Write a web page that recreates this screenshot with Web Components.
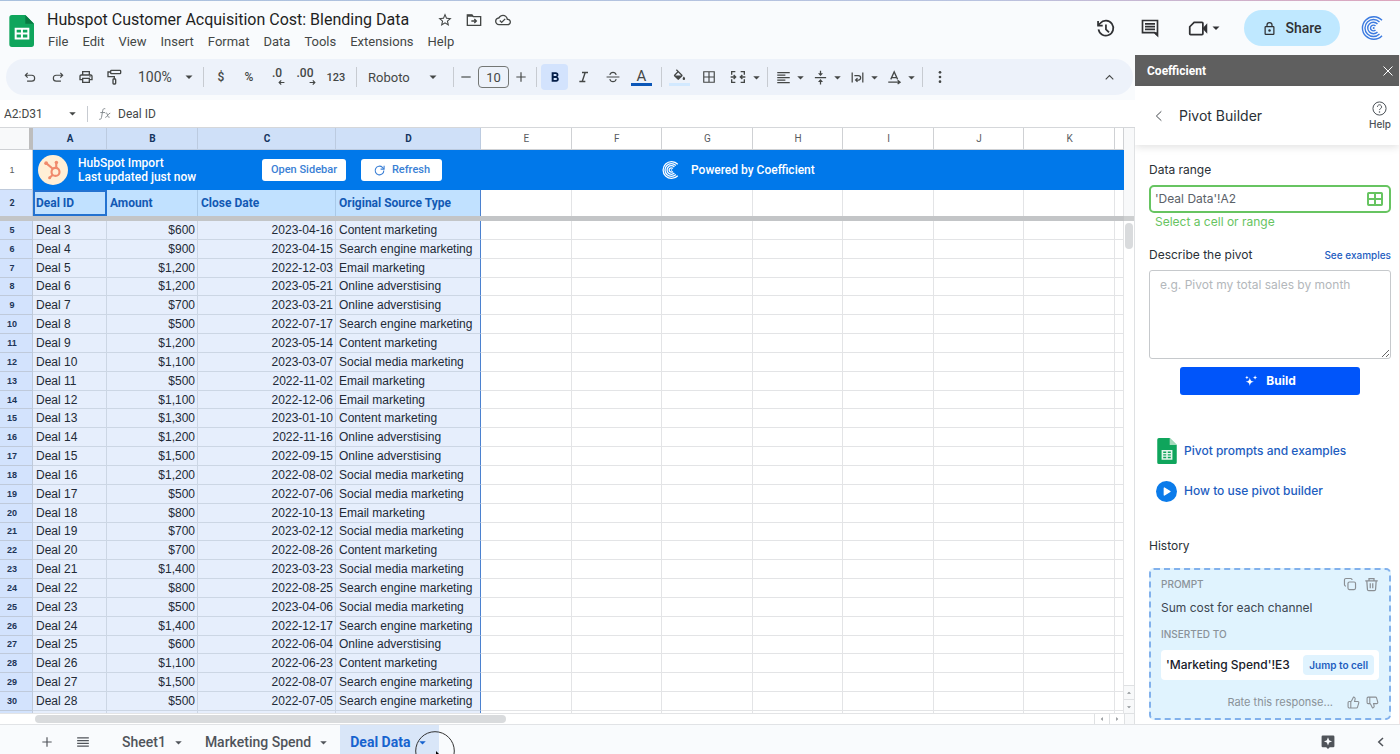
<!DOCTYPE html>
<html lang="en">
<head>
<meta charset="utf-8">
<title>Hubspot Customer Acquisition Cost: Blending Data</title>
<style>
    html, body {
        height: 100%;
        margin: 0;
    }
    body {
        font-family: Roboto, "Liberation Sans", sans-serif;
        font-size: 13px;
        color: #444746;
        background: #f9fbfd;
        overflow: hidden;
    }
</style>
</head>
<body>
<sheet-app></sheet-app>

<script>
// fill icons use currentColor, stroke icons are wrapped in a <g class="s">
const icons = {
    caret: '<path d="M6 9.500h12l-6 6z"/>',
    undo: '<g class="s"><path d="M8 5 4 9l4 4M4.500 9H15a5 5 0 0 1 0 10H7"/></g>',
    redo: '<g class="s"><path d="M16 5l4 4-4 4M19.500 9H9a5 5 0 0 0 0 10h8"/></g>',
    print: '<path d="M19 8h-1V3H6v5H5c-1.660 0-3 1.340-3 3v6h4v4h12v-4h4v-6c0-1.660-1.340-3-3-3zM8 5h8v3H8V5zm8 12v2H8v-4h8v2zm2-2v-2H6v2H4v-4c0-.55.45-1 1-1h14c.55 0 1 .45 1 1v4h-2z"/><circle cx="18" cy="11.500" r="1"/>',
    paint: '<g class="s"><rect x="7" y="2" width="15" height="5" rx="1"/><path d="M7 4.500H3V11.500H12.500v3.500"/><rect x="10.500" y="15" width="4" height="7.500" rx="1"/></g>',
    star: '<path d="M22 9.240l-7.190-.62L12 2 9.190 8.630 2 9.240l5.460 4.730L5.820 21 12 17.270 18.180 21l-1.630-7.030L22 9.240zM12 15.400l-3.760 2.270 1-4.280-3.320-2.880 4.380-.38L12 6.100l1.710 4.040 4.380.38-3.320 2.880 1 4.280L12 15.400z"/>',
    move: '<g class="s"><path d="M2 4.500h7l2 2.500h11V20H2z"/><path d="M8 13.500h7.500M12.500 10.500l3 3-3 3"/></g><path d="M2 4h7l2 3H2z"/>',
    cloud: '<path d="M19.350 10.040C18.670 6.590 15.640 4 12 4 9.110 4 6.600 5.640 5.350 8.040 2.340 8.360 0 10.910 0 14c0 3.310 2.690 6 6 6h13c2.760 0 5-2.240 5-5 0-2.640-2.050-4.780-4.650-4.960zM19 18H6c-2.210 0-4-1.790-4-4 0-2.050 1.530-3.760 3.560-3.970l1.070-.11.5-.95C8.080 7.140 9.940 6 12 6c2.620 0 4.880 1.860 5.390 4.430l.3 1.500 1.530.11c1.560.1 2.780 1.410 2.780 2.960 0 1.650-1.350 3-3 3zm-9-3.820l-2.090-2.090L6.500 13.500 10 17l6.010-6.010-1.410-1.410z"/>',
    history: '<g class="s"><path d="M4 13a8.500 8.500 0 1 0 2-7L3.500 8.500"/><path d="M3.500 3.500v5.300h5.300M12.500 7.500V13l3.500 3.500"/></g>',
    comment: '<g class="s"><path d="M21 21l-3.500-3.500H3V3h18z"/><path d="M6 7h12M6 10.300h12M6 13.600h12"/></g><path d="M21 22v-5h-5z"/>',
    video: '<g class="s"><path d="M7 5h9a1 1 0 0 1 1 1v12a1 1 0 0 1-1 1H3a1 1 0 0 1-1-1V10z"/></g><path d="M17 11.500 22 6v12l-5-5.500z"/>',
    lock: '<g class="s"><rect x="5" y="9" width="14" height="12.500" rx="1"/><path d="M8 9V6.500a4 4 0 0 1 8 0V9"/></g><circle cx="12" cy="15.300" r="2"/>',
    minus: '<g class="s"><path d="M4 12h16"/></g>',
    plus: '<g class="s"><path d="M4 12h16M12 4v16"/></g>',
    bold: '<path d="M15.600 11.800c1-.7 1.600-1.800 1.600-2.800 0-2.300-1.800-4-4-4H7v14h7c2.100 0 3.700-1.700 3.700-3.800 0-1.500-.9-2.800-2.100-3.400zM10 7.500h3a1.500 1.500 0 0 1 0 3h-3v-3zm3.500 9H10v-3h3.500a1.500 1.500 0 0 1 0 3z"/>',
    italic: '<path d="M9 4v2.400h3.300l-3.700 11.200H5V20h9v-2.400h-3.200l3.700-11.200H18V4z"/>',
    strike: '<g class="s"><path d="M1 12h22M17.500 8.500C16.500 5 14.500 4 12 4S7.500 5 6.500 8.500M6.500 15.500c1 3.500 3 4.500 5.500 4.500s4.500-1 5.500-4.500"/></g>',
    bucket: '<path d="M16.560 10.940 7.620 2 6.210 3.410l2.380 2.380-5.150 5.150a1.490 1.490 0 0 0 0 2.120l5.500 5.500c.29.29.68.44 1.060.44s.77-.15 1.060-.44l5.500-5.500c.59-.58.59-1.530 0-2.120zM5.210 12 10 7.210 14.790 12zM19 13.500s-2 2.170-2 3.500a2 2 0 1 0 4 0c0-1.330-2-3.500-2-3.500z"/>',
    borders: '<g class="s"><path d="M3 3h18v18H3zM3 12h18M12 3v18"/></g>',
    merge: '<g class="s"><path d="M8 4H2.500v4.500M2.500 15.500V20H8M16 4h5.500v4.500M21.500 15.500V20H16M1 12h7M5.500 9l3 3-3 3M23 12h-7M18.500 9l-3 3 3 3"/></g>',
    align: '<g class="s"><path d="M2 4h20M2 8h13M2 12h20M2 16h13M2 20h20"/></g>',
    valign: '<g class="s"><path d="M3 12h18M12 1v6M12 23v-6"/></g><path d="M8 5h8l-4 4.500zM8 19h8l-4-4.500z"/>',
    wrap: '<g class="s"><path d="M3.500 4v16M20.500 4v16M7 9h6.500a3.500 3.500 0 0 1 0 7H10M12 13l-3 3 3 3"/></g>',
    rotate: '<g class="s"><path d="M6 15 11.500 3 17 15M8 12h7M2 19.500h17M17 16.500l4 3-4 3"/></g>',
    more: '<circle cx="12" cy="5" r="2"/><circle cx="12" cy="12" r="2"/><circle cx="12" cy="19" r="2"/>',
    up: '<g class="s"><path d="M5 15.500 12 8.500l7 7"/></g>',
    left: '<g class="s"><path d="M16 4 7.500 12l8.500 8"/></g>',
    close: '<g class="s"><path d="M3 3l18 18M21 3 3 21"/></g>',
    arrowleft: '<g class="s"><path d="M22 12H6M11 5l-7 7 7 7"/></g>',
    arrowright: '<g class="s"><path d="M2 12h16M13 5l7 7-7 7"/></g>',
    menu: '<g class="s"><path d="M2 5h20M2 9.700h20M2 14.300h20M2 19h20"/></g>',
    refresh: '<g class="s"><path d="M20 12a8 8 0 1 1-2.500-5.800L20 9"/><path d="M20.500 3v6.500H14"/></g>',
    help: '<g class="s"><circle cx="12" cy="12" r="10.500"/><path d="M8.700 9.300a3.300 3.300 0 1 1 5 2.900c-1.100.7-1.700 1.100-1.700 2.300"/></g><circle cx="12" cy="17.500" r="1.200"/>',
    cells: '<g class="s"><rect x="1.500" y="3" width="21" height="18" rx="1"/><path d="M12 3v18M1.500 12h21"/></g>',
    sparkle: '<path d="M10 6c.9 5 2 6.200 7 7.200-5 1-6.100 2.200-7 7.300-.9-5.100-2-6.300-7-7.300 5-1 6.100-2.200 7-7.200zM19 2c.6 2.800 1.200 3.400 4 4-2.800.6-3.400 1.200-4 4-.6-2.800-1.200-3.400-4-4 2.800-.6 3.400-1.200 4-4zM5 3l1 2 2 1-2 1-1 2-1-2-2-1 2-1z"/>',
    play: '<circle cx="12" cy="12" r="12" fill="#0b7bea"/><path fill="#fff" stroke="#fff" stroke-width="1.500" stroke-linejoin="round" d="M9.500 8v8l6.500-4z"/>',
    copy: '<g class="s"><rect x="8.500" y="8.500" width="13" height="13" rx="2.500"/><path d="M5 15.500a2.500 2.500 0 0 1-2.500-2.500V5A2.500 2.500 0 0 1 5 2.500h8A2.500 2.500 0 0 1 15.500 5"/></g>',
    trash: '<g class="s"><path d="M2 6h20M8 6V2.500h8V6M4.500 6l1 14a2 2 0 0 0 2 1.800h9a2 2 0 0 0 2-1.800l1-14M10 10v8M14 10v8"/></g>',
    thumbup: '<g class="s"><path d="M7 10v12M15 5.880 14 10h5.830a2 2 0 0 1 1.920 2.560l-2.330 8A2 2 0 0 1 17.500 22H4a2 2 0 0 1-2-2v-8a2 2 0 0 1 2-2h2.760a2 2 0 0 0 1.790-1.110L12 2a3.130 3.130 0 0 1 3 3.880z"/></g>',
    thumbdown: '<g class="s"><path d="M7 14V2M15 18.120 14 14h5.830a2 2 0 0 0 1.920-2.560l-2.330-8A2 2 0 0 0 17.500 2H4a2 2 0 0 0-2 2v8a2 2 0 0 0 2 2h2.760a2 2 0 0 1 1.790 1.110L12 22a3.130 3.130 0 0 0 3-3.880z"/></g>',
    explore: '<path fill-rule="evenodd" d="M3 1h18a2 2 0 0 1 2 2v16a2 2 0 0 1-2 2h-6l-3 3-3-3H3a2 2 0 0 1-2-2V3a2 2 0 0 1 2-2zm9 3-2 5-5 2 5 2 2 5 2-5 5-2-5-2z"/>',
    fx: '<g class="s"><path d="M12.500 3c-3-.8-4 .5-4.500 3.500L6 18c-.5 2.500-1.500 3.500-4 3M4 9.500h8M13 10.500c2-.8 2.500.3 3.200 3 .8 3.200 1.300 4.500 3.800 4M21 10.500c-3 0-5.500 7-8.500 7.500"/></g>',
    sheets: '<path fill="#0fa55c" d="M4.500 0h10L21 6.500V22a2 2 0 0 1-2 2H4.500a2 2 0 0 1-2-2V2a2 2 0 0 1 2-2z"/><path fill="#087a42" d="M14.500 0 21 6.500h-6.500z"/><path fill="#fff" fill-rule="evenodd" d="M6.500 9.500h11v8.800h-11zM8 11v2.200h3.200V11zm4.700 0v2.200H16V11zM8 14.700v2.200h3.200v-2.200zm4.700 0v2.200H16v-2.200z"/>',
    sheetfile: '<path fill="#0fa55c" d="M4.500 0h10L21 6.500V22.500a1.500 1.500 0 0 1-1.500 1.500h-15A1.500 1.500 0 0 1 3 22.500v-21A1.500 1.500 0 0 1 4.500 0z"/><path fill="#a5dabb" d="M14.500 0 21 6.500h-6.500z"/><path fill="#e6f6ec" fill-rule="evenodd" d="M7 11h10v9H7zm1.500 1.500v1.300h2.800v-1.300zm4.200 0v1.300h2.800v-1.300zM8.500 15v1.200h2.800V15zm4.200 0v1.200h2.800V15zm-4.200 2.400v1.200h2.800v-1.200zm4.200 0v1.200h2.800v-1.200z"/>',
    coefficient: '<g class="s"><path d="M21 4.300A11.300 11.300 0 1 0 21 19.700"/><path d="M18.500 6A8.500 8.500 0 1 0 18.500 18"/><path d="M16.500 8A5.700 5.700 0 1 0 16.500 16"/><path d="M14.500 10A2.900 2.900 0 1 0 14.500 14"/></g><circle cx="12.700" cy="12" r="1"/>',
    sprocket: '<circle cx="12" cy="12" r="12" fill="#ffefd6"/><g fill="none" stroke="#f08a6c" stroke-width="1.700"><circle cx="14" cy="13.500" r="3.200"/><path d="M14.600 10.300V6.500M11.800 11 6.500 6.500M11.900 15.800 9.500 18"/></g><g fill="#f08a6c"><circle cx="14.700" cy="6" r="1.400"/><circle cx="6.500" cy="6.500" r="1.500"/><circle cx="9.300" cy="18.200" r="1.200"/></g>',
};

const reset = `
    button, input, select, textarea {
        box-sizing: border-box;
        margin: 0;
        padding: 0;
        border: 0;
        background: none;
        font: inherit;
        color: inherit;
        outline: 0;
    }
    button {
        display: inline-flex;
        align-items: center;
        justify-content: center;
        cursor: pointer;
    }
    a { color: inherit; text-decoration: none; }
`;

function define(name, html, setup) {
    const template = document.createElement('template');
    template.innerHTML = html;
    customElements.define(name, class extends HTMLElement {
        constructor() {
            super();
            this.attachShadow({ mode: 'open' });
            this.shadowRoot.appendChild(template.content.cloneNode(true));
        }
        connectedCallback() {
            if (setup) setup.call(this, this.shadowRoot);
        }
    });
}

customElements.define('ui-icon', class extends HTMLElement {
    connectedCallback() {
        if (this.shadowRoot) return;
        this.attachShadow({ mode: 'open' });
        const size = this.getAttribute('size') || 16;
        this.shadowRoot.innerHTML = `
            <style>
                :host { display: inline-flex; flex: none; }
                svg { display: block; fill: currentColor; overflow: visible; }
                .s { fill: none; stroke: currentColor; stroke-width: var(--stroke, 2); }
            </style>
            <svg width="${size}" height="${size}" viewBox="0 0 24 24" aria-hidden="true">${icons[this.getAttribute('name')]}</svg>`;
    }
});

define('doc-header', `
    <style>
        ${reset}
        :host {
            display: flex;
            align-items: center;
            height: 54px;
            padding: 0 15px 0 6px;
            border-top: 1px solid;
            border-image: linear-gradient(90deg, #a9c1de, #b9c3e0 70%, #dda5bd) 1;
        }
        :host > ui-icon, .doc { margin-top: 5px; }
        .doc { flex: 1; margin-left: 9px; }
        .title { display: flex; align-items: center; gap: 13px; height: 22px; }
        h1 { margin: 0 15px 0 0; font-size: 16px; line-height: 22px; font-weight: 400; color: #1f1f1f; }
        .title button { width: 16px; }
        nav { display: flex; gap: 14px; height: 22px; align-items: center; padding-left: 1px; }
        .actions { display: flex; align-items: center; }
        .actions > button { color: #303134; }
        .actions > .share {
            gap: 8px;
            width: 96px;
            height: 36px;
            margin: 0 21px;
            border-radius: 18px;
            background: #bfe8ff;
            font-size: 14px;
            font-weight: 500;
        }
        .actions > .logo { color: #3c7be0; --stroke: 1.400; }
    </style>
    <ui-icon name="sheets" size="32"></ui-icon>
    <div class="doc">
        <div class="title">
            <h1>Hubspot Customer Acquisition Cost: Blending Data</h1>
            <button aria-label="Star"><ui-icon name="star"></ui-icon></button>
            <button aria-label="Move"><ui-icon name="move"></ui-icon></button>
            <button aria-label="Saved to Drive"><ui-icon name="cloud"></ui-icon></button>
        </div>
        <nav></nav>
    </div>
    <div class="actions">
        <button aria-label="Version history" style="margin-right:24px"><ui-icon name="history" size="21"></ui-icon></button>
        <button aria-label="Comments" style="margin-right:28px"><ui-icon name="comment" size="20"></ui-icon></button>
        <button aria-label="Join a call"><ui-icon name="video" size="21"></ui-icon><ui-icon name="caret" size="14"></ui-icon></button>
        <button class="share"><ui-icon name="lock" size="15"></ui-icon>Share</button>
        <button class="logo" aria-label="Coefficient"><ui-icon name="coefficient" size="24"></ui-icon></button>
    </div>
`, function (root) {
    root.querySelector('nav').innerHTML = ['File', 'Edit', 'View', 'Insert', 'Format', 'Data', 'Tools', 'Extensions', 'Help']
        .map(item => `<button>${item}</button>`).join('');
});

define('tool-select', `
    <style>
        ${reset}
        :host { display: inline-grid; align-items: center; }
        select { grid-area: 1 / 1; appearance: none; width: 100%; height: 24px; }
        ui-icon { grid-area: 1 / 1; justify-self: end; pointer-events: none; }
    </style>
    <select></select>
    <ui-icon name="caret" size="14"></ui-icon>
`, function (root) {
    const select = root.querySelector('select');
    select.setAttribute('aria-label', this.getAttribute('label'));
    select.innerHTML = `<option>${this.getAttribute('value')}</option>`;
});

define('tool-bar', `
    <style>
        ${reset}
        :host { display: block; padding: 4px 2px 5px 6px; }
        .pill {
            display: flex;
            align-items: center;
            height: 36px;
            padding: 0 10px;
            border-radius: 18px;
            background: #edf2fa;
        }
        .group { display: flex; align-items: center; }
        .group + .group::before {
            content: "";
            width: 1px;
            height: 20px;
            margin: 0 3px;
            background: #c7cbd1;
        }
        button { width: 28px; height: 26px; border-radius: 4px; }
        .zoom { width: 58px; margin: 0 4px 0 10px; font-size: 14px; }
        .font { width: 72px; margin: 0 10px 0 8px; font-size: 13px; }
        .num { font-size: 11px; width: 34px; font-weight: 500; }
        .cur { font-size: 12px; font-weight: 500; }
        .dec { display: inline-grid; align-content: center; justify-content: center; font-size: 12px; font-weight: 500; line-height: 11px; }
        .dec ui-icon { justify-self: end; margin-right: -3px; --stroke: 4; }
        .step { width: 18px; }
        .size { width: 31px; height: 22px; margin: 0 3px; border: 1px solid #747775; border-radius: 4px; text-align: center; }
        .on { background: #d3e3fd; color: #041e49; }
        .style { gap: 2px; }
        .group.style::before { margin: 0 2px 0 6px; }
        .style button { width: 27px; }
        .color { flex-direction: column; gap: 0; font-size: 15px; line-height: 14px; }
        .color::after { content: ""; width: 21px; height: 3px; background: var(--c); }
        .wide { width: 37px; gap: 3px; }
        .style .wide { width: 40px; gap: 4px; }
        .wide ui-icon + ui-icon { margin-right: -4px; }
        .collapse { margin-left: auto; }
    </style>
    <div class="pill">
        <div class="group">
            <button aria-label="Undo"><ui-icon name="undo" size="14"></ui-icon></button>
            <button aria-label="Redo"><ui-icon name="redo" size="14"></ui-icon></button>
            <button aria-label="Print"><ui-icon name="print"></ui-icon></button>
            <button aria-label="Paint format"><ui-icon name="paint"></ui-icon></button>
            <tool-select class="zoom" label="Zoom" value="100%"></tool-select>
        </div>
        <div class="group">
            <button class="cur" aria-label="Currency">$</button>
            <button class="cur" aria-label="Percent">%</button>
            <button class="dec" aria-label="Decrease decimals"><span>.0</span><ui-icon name="arrowleft" size="7"></ui-icon></button>
            <button class="dec" aria-label="Increase decimals"><span>.00</span><ui-icon name="arrowright" size="7"></ui-icon></button>
            <button class="num" aria-label="More formats">123</button>
        </div>
        <div class="group">
            <tool-select class="font" label="Font" value="Roboto"></tool-select>
        </div>
        <div class="group">
            <button class="step" aria-label="Decrease font size"><ui-icon name="minus" size="14"></ui-icon></button>
            <input class="size" aria-label="Font size" value="10">
            <button class="step" aria-label="Increase font size"><ui-icon name="plus" size="14"></ui-icon></button>
        </div>
        <div class="group style">
            <button class="on" aria-label="Bold"><ui-icon name="bold"></ui-icon></button>
            <button aria-label="Italic"><ui-icon name="italic"></ui-icon></button>
            <button aria-label="Strikethrough"><ui-icon name="strike" size="14"></ui-icon></button>
            <button class="color" style="--c:#0b57b8" aria-label="Text color">A</button>
        </div>
        <div class="group style">
            <button class="color" style="--c:#d2e9ff" aria-label="Fill color"><ui-icon name="bucket" size="15"></ui-icon></button>
            <button aria-label="Borders"><ui-icon name="borders" size="14"></ui-icon></button>
            <button class="wide" aria-label="Merge cells"><ui-icon name="merge"></ui-icon><ui-icon name="caret" size="13"></ui-icon></button>
        </div>
        <div class="group">
            <button class="wide" aria-label="Horizontal align"><ui-icon name="align" size="15"></ui-icon><ui-icon name="caret" size="13"></ui-icon></button>
            <button class="wide" aria-label="Vertical align"><ui-icon name="valign" size="15"></ui-icon><ui-icon name="caret" size="13"></ui-icon></button>
            <button class="wide" aria-label="Text wrapping"><ui-icon name="wrap" size="15"></ui-icon><ui-icon name="caret" size="13"></ui-icon></button>
            <button class="wide" aria-label="Text rotation"><ui-icon name="rotate" size="15"></ui-icon><ui-icon name="caret" size="13"></ui-icon></button>
        </div>
        <div class="group">
            <button aria-label="More"><ui-icon name="more"></ui-icon></button>
        </div>
        <button class="collapse" aria-label="Hide the menus"><ui-icon name="up" size="13"></ui-icon></button>
    </div>
`);

define('formula-bar', `
    <style>
        ${reset}
        :host {
            display: flex;
            align-items: center;
            height: 27px;
            padding-left: 4px;
            background: #fff;
            border-bottom: 1px solid #d5d7da;
            font-size: 12px;
        }
        .name { width: 62px; }
        .sep { width: 1px; height: 16px; margin: 0 10px 0 8px; background: #c7cbd1; }
        .fx { color: #80868b; --stroke: 1.600; }
        .formula { flex: 1; margin-left: 6px; min-width: 0; }
    </style>
    <input class="name" aria-label="Name box" value="A2:D31">
    <button aria-label="Named ranges"><ui-icon name="caret" size="13"></ui-icon></button>
    <span class="sep"></span>
    <ui-icon class="fx" name="fx" size="14"></ui-icon>
    <input class="formula" aria-label="Formula" value="Deal ID">
`);

const deals = [
    ['$600', '2023-04-16', 'Content'],
    ['$900', '2023-04-15', 'Search engine'],
    ['$1,200', '2022-12-03', 'Email'],
    ['$1,200', '2023-05-21', 'Online'],
    ['$700', '2023-03-21', 'Online'],
    ['$500', '2022-07-17', 'Search engine'],
    ['$1,200', '2023-05-14', 'Content'],
    ['$1,100', '2023-03-07', 'Social media'],
    ['$500', '2022-11-02', 'Email'],
    ['$1,100', '2022-12-06', 'Email'],
    ['$1,300', '2023-01-10', 'Content'],
    ['$1,200', '2022-11-16', 'Online'],
    ['$1,500', '2022-09-15', 'Online'],
    ['$1,200', '2022-08-02', 'Social media'],
    ['$500', '2022-07-06', 'Social media'],
    ['$800', '2022-10-13', 'Email'],
    ['$700', '2023-02-12', 'Social media'],
    ['$700', '2022-08-26', 'Content'],
    ['$1,400', '2023-03-23', 'Social media'],
    ['$800', '2022-08-25', 'Search engine'],
    ['$500', '2023-04-06', 'Social media'],
    ['$1,400', '2022-12-17', 'Search engine'],
    ['$600', '2022-06-04', 'Online'],
    ['$1,100', '2022-06-23', 'Content'],
    ['$1,500', '2022-08-07', 'Search engine'],
    ['$500', '2022-07-05', 'Search engine'],
];

define('import-banner', `
    <style>
        ${reset}
        :host {
            display: flex;
            align-items: center;
            height: 40px;
            padding-left: 5px;
            color: #fff;
            background: #0078ea;
            font-family: Roboto, sans-serif;
            font-size: 12px;
            line-height: 14px;
            font-weight: 500;
            text-align: left;
        }
        p { margin: 0 0 0 10px; width: 184px; }
        button { height: 22px; border-radius: 3px; background: #fff; color: #3a7fd5; font-size: 11px; font-weight: 500; }
        .open { width: 84px; }
        .refresh { width: 81px; gap: 6px; margin-left: 15px; }
        .powered { display: flex; align-items: center; gap: 11px; margin-left: 220px; }
        .powered ui-icon { --stroke: 1.700; }
    </style>
    <ui-icon name="sprocket" size="30"></ui-icon>
    <p>HubSpot Import<br>Last updated just now</p>
    <button class="open">Open Sidebar</button>
    <button class="refresh"><ui-icon name="refresh" size="13"></ui-icon>Refresh</button>
    <div class="powered"><ui-icon name="coefficient" size="18"></ui-icon>Powered by Coefficient</div>
`);

define('sheet-grid', `
    <style>
        ${reset}
        :host {
            flex: 1;
            min-height: 0;
            display: grid;
            grid-template: minmax(0, 1fr) 11px / minmax(0, 1fr) 11px;
            background: #fff;
        }
        .cells { min-height: 0; height: 100%; overflow: hidden; }
        table {
            width: 100%;
            height: 100%;
            table-layout: fixed;
            border-collapse: separate;
            border-spacing: 0;
            font-family: "Liberation Sans", Arial, sans-serif;
            font-size: 12px;
            line-height: 14px;
            color: #222a36;
        }
        th, td {
            box-sizing: border-box;
            padding: 0 2px 0 3px;
            border: 0 solid #e3e4e6;
            border-width: 0 1px 1px 0;
            font-weight: 400;
            text-align: left;
            white-space: nowrap;
            overflow: hidden;
        }
        .rows th:first-child { padding: 0 8px 0 0; border-color: #bfcadb; background: #d3e3fd; text-align: center; font-size: 9px; font-weight: 700; line-height: 12px; color: #1d3557; }
        thead th { height: 22px; text-align: center; font-family: Roboto, sans-serif; font-size: 10px; border-color: #cfd1d4; color: #575b5f; }
        thead th:first-child { background: #f8f9fa; border-right: 4px solid #bdbdbd; }
        thead .on { background: #cfe0f8; border-color: #bccbe0; color: #14355f; font-weight: 700; }
        .rows .one th:first-child { background: #fff; font-weight: 400; color: #575b5f; }
        .one > * { height: 40px; padding: 0; border-color: #c9ccd0; }
        .one td { border: 0; background: #0078ea; }
        .names > * { height: 26px; border-bottom: 0; }
        .names th { font-family: Roboto, sans-serif; font-weight: 700; color: #1259b4; background: #c1e1ff; border-color: #a9c9e8; }
        .names .active { border: 2px solid #2472d0; padding: 0 1px; }
        .freeze td { height: 5px; padding: 0; border: 0; background: #c3c5c7; }
        .deal td:nth-child(-n + 5) { background: #e6eefc; border-color: #ccd6e4; }
        .num { text-align: right; }
        tr td:nth-child(5), .names th:nth-child(5) { border-right-color: #4b81cf !important; }
        .last > * { height: 2px; font-size: 0; line-height: 0 !important; border-bottom: 0; }
        .v { display: flex; flex-direction: column; background: #f8f9fa; border-right: 1px solid #dfe1e3; }
        .v .thumb { width: 8px; height: 26px; margin: 2px auto 0; border-radius: 4px; background: #d9dbdd; }
        .v .track { flex: 1; margin-top: 88px; border-top: 5px solid #cdcfd0; background: #fff; }
        .v button { height: 14px; border-top: 1px solid #dfe1e3; color: #8b8f93; }
        .h { display: flex; align-items: center; border-top: 1px solid #e3e4e6; }
        .h .thumb { width: 471px; height: 8px; margin-left: 35px; border-radius: 4px; background: #d9dbdd; }
        .h button { width: 15px; height: 10px; border-left: 1px solid #dfe1e3; color: #8b8f93; }
        .h .thumb + button { margin-left: auto; }
        .corner { background: #f8f9fa; border: solid #dfe1e3; border-width: 1px 1px 0 1px; }
        .n { transform: rotate(180deg); }
        .w { transform: rotate(90deg); }
        .e { transform: rotate(-90deg); }
    </style>
    <div class="cells">
        <table>
            <colgroup>
                <col style="width:33px"><col style="width:74px"><col style="width:91px"><col style="width:138px"><col style="width:145px">
                <col span="7"><col style="width:9px">
            </colgroup>
            <thead><tr></tr></thead>
            <tbody class="rows">
                <tr class="one"><th scope="row">1</th><td colspan="12"><import-banner></import-banner></td></tr>
                <tr class="names"><th scope="row">2</th><th class="active">Deal ID</th><th>Amount</th><th>Close Date</th><th>Original Source Type</th></tr>
                <tr class="freeze"><td colspan="13"></td></tr>
            </tbody>
        </table>
    </div>
    <div class="v">
        <div class="track"><div class="thumb"></div></div>
        <button aria-label="Scroll up"><ui-icon class="n" name="caret" size="8"></ui-icon></button>
        <button aria-label="Scroll down"><ui-icon name="caret" size="8"></ui-icon></button>
    </div>
    <div class="h">
        <div class="thumb"></div>
        <button aria-label="Scroll left"><ui-icon class="w" name="caret" size="8"></ui-icon></button>
        <button aria-label="Scroll right"><ui-icon class="e" name="caret" size="8"></ui-icon></button>
    </div>
    <div class="corner"></div>
`, function (root) {
    const empty = '<td></td>'.repeat(8);
    root.querySelector('thead tr').innerHTML = '<th></th>' +
        [...'ABCD'].map(c => `<th class="on" scope="col">${c}</th>`).join('') +
        [...'EFGHIJK'].map(c => `<th scope="col">${c}</th>`).join('') + '<th></th>';
    root.querySelector('.names').insertAdjacentHTML('beforeend', empty);
    root.querySelector('.rows').insertAdjacentHTML('beforeend', deals.map(([amount, date, source], i) => {
        const kind = source === 'Online' ? 'adverstising' : 'marketing';
        return `<tr class="deal"><th scope="row">${i + 5}</th><td>Deal ${i + 3}</td><td class="num">${amount}</td><td class="num">${date}</td><td>${source} ${kind}</td>${empty}</tr>`;
    }).join('') + `<tr class="deal last"><th></th><td></td><td></td><td></td><td></td>${empty}</tr>`);
});

define('history-card', `
    <style>
        ${reset}
        :host {
            display: block;
            padding: 6px 10px 8px;
            border: 2px dashed #82b1ec;
            border-radius: 5px;
            background: #e0f3fe;
            color: #3c4650;
        }
        .row { display: flex; align-items: center; justify-content: space-between; }
        h3 { margin: 0; font-size: 10px; line-height: 16px; font-weight: 500; color: #8a9299; }
        p { margin: 8px 0 10px; font-size: 12px; line-height: 16px; }
        .tools { display: flex; gap: 7px; color: #8a8f94; }
        .target { height: 30px; margin: 8px 0 14px; padding: 0 5px; border-radius: 4px; background: #fff; color: #17202a; font-size: 12px; font-weight: 500; }
        .jump { height: 20px; padding: 0 6px; border-radius: 4px; background: #e0f3fe; color: #1d5dbf; font-size: 10px; font-weight: 600; }
        .rate { justify-content: flex-end; gap: 14px; font-size: 11px; line-height: 16px; color: #8a9299; }
    </style>
    <div class="row">
        <h3>PROMPT</h3>
        <div class="tools">
            <button aria-label="Copy"><ui-icon name="copy" size="14"></ui-icon></button>
            <button aria-label="Delete"><ui-icon name="trash" size="15"></ui-icon></button>
        </div>
    </div>
    <p><slot></slot></p>
    <h3>INSERTED TO</h3>
    <div class="row target"><slot name="target"></slot><button class="jump">Jump to cell</button></div>
    <div class="row rate">
        Rate this response...
        <div class="tools" style="gap:6px">
            <button aria-label="Good response"><ui-icon name="thumbup" size="13"></ui-icon></button>
            <button aria-label="Bad response"><ui-icon name="thumbdown" size="13"></ui-icon></button>
        </div>
    </div>
`);

define('coefficient-panel', `
    <style>
        ${reset}
        :host {
            display: flex;
            flex-direction: column;
            min-height: 0;
            overflow: hidden;
            background: #fff;
            color: #2a3036;
            border-right: 1px solid #fbe4e4;
            font-family: Inter, "Open Sans", sans-serif;
            font-size: 12px;
            line-height: 16px;
        }
        .bar { display: flex; align-items: center; justify-content: space-between; height: 31px; flex: none; padding: 0 5px 0 12px; background: #5f5f5f; color: #fff; font-family: Roboto, sans-serif; font-size: 12px; font-weight: 700; }
        .head { display: flex; align-items: center; height: 59px; flex: none; padding: 0 8px 0 17px; box-shadow: 0 2px 8px rgba(0, 0, 0, .12); }
        h2 { flex: 1; margin: 0 0 0 13px; font-size: 14px; font-weight: 400; }
        .help { flex-direction: column; font-size: 10px; line-height: 14px; color: #4c5258; gap: 1px; font-weight: 500; --stroke: 1.600; }
        .body { padding: 17px 8px 5px 14px; }
        .line { display: flex; align-items: center; justify-content: space-between; }
        .line a { font-size: 10px; font-weight: 500; color: #1d5dbf; }
        .range { display: flex; align-items: center; height: 28px; box-sizing: border-box; margin-top: 7px; padding: 0 6px 0 4px; border: 2px solid #67c461; border-radius: 5px; color: #67c461; --stroke: 3; }
        .range input { flex: 1; min-width: 0; color: #5b6168; }
        .hint { margin: 1px 6px 17px; color: #67c461; }
        textarea { display: block; width: 100%; height: 89px; margin-top: 7px; padding: 6px 10px; border: 1px solid #c6c9cc; border-radius: 3px; resize: vertical; }
        textarea::placeholder { color: #b3b7bb; }
        .build { display: flex; gap: 8px; width: 180px; height: 28px; margin: 8px auto 43px; border-radius: 3px; background: #0055fa; color: #fff; font-weight: 700; }
        .link { display: flex; align-items: center; gap: 7px; height: 26px; margin: 0 0 14px 7px; color: #1d5dbf; font-weight: 500; }
        .link ui-icon { width: 21px; justify-content: center; }
        h4 { margin: 34px 0 14px; font-size: 12px; font-weight: 400; }
    </style>
    <div class="bar">Coefficient<button aria-label="Close"><ui-icon name="close" size="12"></ui-icon></button></div>
    <div class="head">
        <button aria-label="Back"><ui-icon name="left" size="14" style="--stroke:1.500"></ui-icon></button>
        <h2>Pivot Builder</h2>
        <button class="help"><ui-icon name="help" size="15"></ui-icon>Help</button>
    </div>
    <div class="body">
        <label for="range">Data range</label>
        <div class="range"><input id="range" value="'Deal Data'!A2"><ui-icon name="cells"></ui-icon></div>
        <div class="hint">Select a cell or range</div>
        <div class="line"><label for="pivot">Describe the pivot</label><a href="#examples">See examples</a></div>
        <textarea id="pivot" placeholder="e.g. Pivot my total sales by month"></textarea>
        <button class="build"><ui-icon name="sparkle" size="14"></ui-icon>Build</button>
        <a class="link" href="#prompts"><ui-icon name="sheetfile" size="26"></ui-icon>Pivot prompts and examples</a>
        <a class="link" href="#how-to"><ui-icon name="play" size="21"></ui-icon>How to use pivot builder</a>
        <h4>History</h4>
        <history-card>Sum cost for each channel<span slot="target">'Marketing Spend'!E3</span></history-card>
    </div>
`);

define('sheet-tabs', `
    <style>
        ${reset}
        :host {
            box-sizing: border-box;
            display: flex;
            align-items: flex-start;
            height: 30px;
            overflow: hidden;
            border-top: 1px solid #e1e3e6;
            padding: 0 13px 0 40px;
            color: #50545a;
        }
        button { height: 34px; }
        .all { margin: 0 22px; }
        .tab { gap: 6px; padding: 0 10px; font-size: 14px; font-weight: 500; }
        .tab.on { background: #d9e6f8; color: #1763cf; font-weight: 700; }
        .right { display: flex; gap: 40px; margin-left: auto; }
    </style>
    <button aria-label="Add sheet"><ui-icon name="plus" size="14"></ui-icon></button>
    <button class="all" aria-label="All sheets"><ui-icon name="menu" size="14"></ui-icon></button>
    <button class="tab">Sheet1<ui-icon name="caret" size="13"></ui-icon></button>
    <button class="tab">Marketing Spend<ui-icon name="caret" size="13"></ui-icon></button>
    <button class="tab on">Deal Data<ui-icon name="caret" size="13"></ui-icon></button>
    <div class="right">
        <button aria-label="Explore"><ui-icon name="explore" size="14"></ui-icon></button>
        <button aria-label="Show side panel"><ui-icon name="left" size="12" style="--stroke:3"></ui-icon></button>
    </div>
`);

define('sheet-app', `
    <style>
        :host {
            position: relative;
            display: grid;
            grid-template: auto minmax(0, 1fr) auto / minmax(0, 1fr) 265px;
            height: 100vh;
            overflow: hidden;
        }
        doc-header, sheet-tabs { grid-column: 1 / -1; }
        main { display: flex; flex-direction: column; min-width: 0; min-height: 0; }
        .pointer { position: absolute; left: 415px; bottom: -17px; width: 40px; height: 40px; pointer-events: none; }
    </style>
    <doc-header></doc-header>
    <main>
        <tool-bar></tool-bar>
        <formula-bar></formula-bar>
        <sheet-grid></sheet-grid>
    </main>
    <coefficient-panel></coefficient-panel>
    <sheet-tabs></sheet-tabs>
    <svg class="pointer" viewBox="0 0 40 40" aria-hidden="true"><circle cx="20" cy="20" r="19.300" fill="none" stroke="#333"/><path d="M21 20v9l7-2z"/></svg>
`);
</script>
</body>
</html>
